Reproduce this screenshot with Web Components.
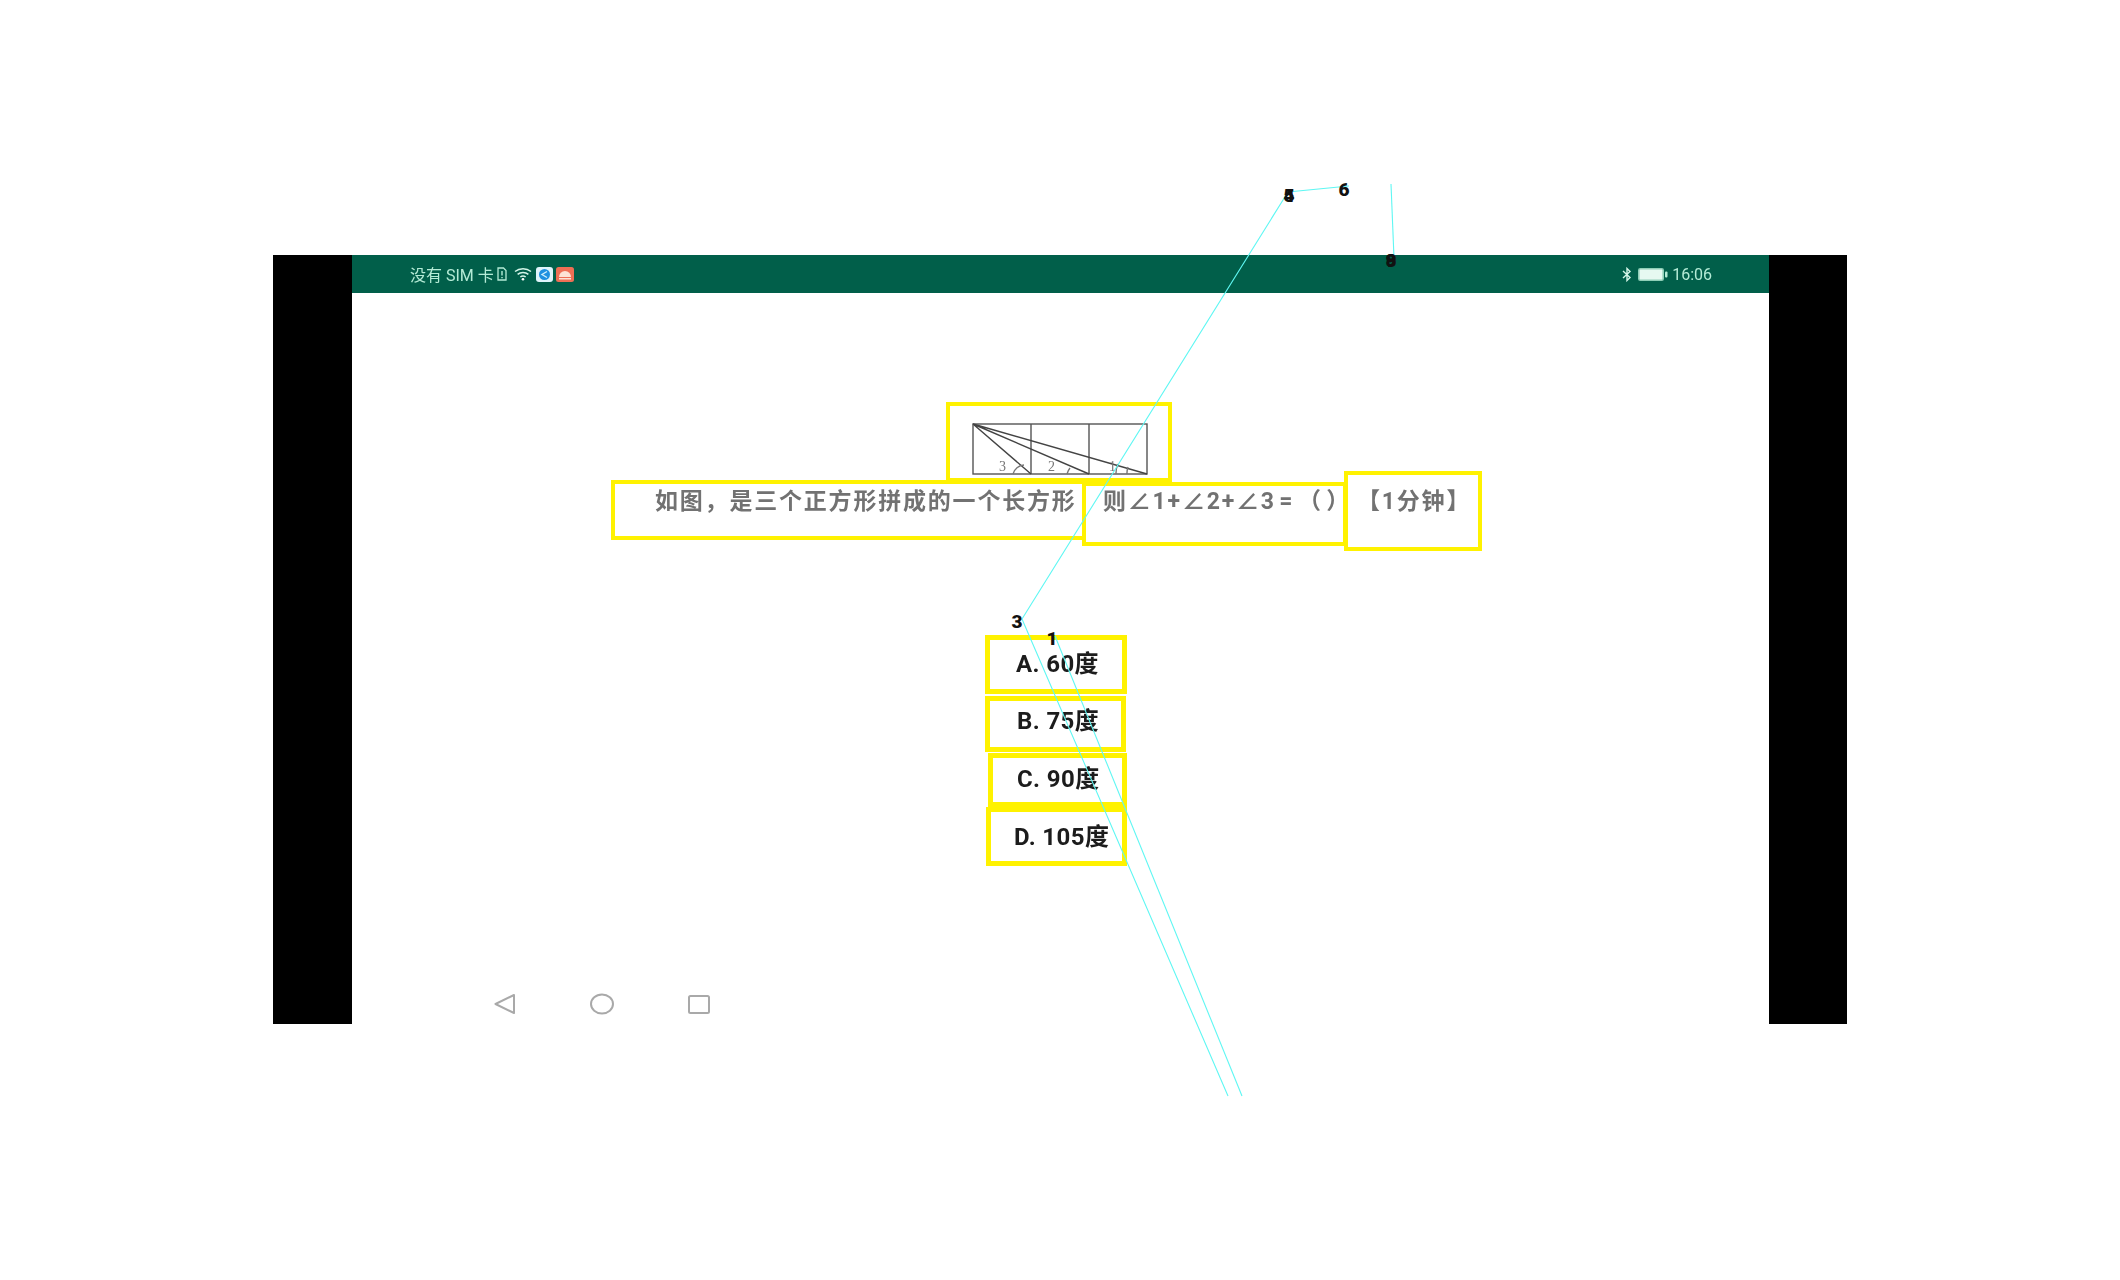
<!DOCTYPE html>
<html lang="zh"><head><meta charset="utf-8"><title>题目</title>
<style>
html,body{margin:0;background:#fff}
body{width:2120px;height:1280px;position:relative;overflow:hidden;font-family:Roboto,"Noto Sans CJK SC",sans-serif}
</style></head><body>
<device-frame>
  <status-bar slot="status"></status-bar>
  <figure-box></figure-box>
  <question-row>
    <anno-box style="--w:475px;--h:60px;--mt:9px;--pl:40px;--pt:3px" class="q">如图，是三个正方形拼成的一个长方形</anno-box>
    <anno-box style="--w:265px;--h:64px;--mt:11px;--ml:-4px;--pl:17px;--pt:1px;word-spacing:-4px" class="q">则∠1+∠2+∠3 = （ ）</anno-box>
    <anno-box style="--w:138px;--h:80px;--ml:-3px;--pl:9px;--pt:12px" class="q">【1分钟】</anno-box>
  </question-row>
  <option-list>
    <anno-box class="o" style="--w:142px;--h:59px;--ml:633px;--pl:26px;--pt:8px">A. 60度</anno-box>
    <anno-box class="o" style="--w:141px;--h:56px;--ml:633px;--mt:2px;--pl:27px;--pt:4px">B. 75度</anno-box>
    <anno-box class="o" style="--w:139px;--h:54px;--ml:636px;--mt:1px;--pl:24px;--pt:5px">C. 90度</anno-box>
    <anno-box class="o" style="--w:141px;--h:59px;--ml:634px;--pl:23px;--pt:9px">D. 105度</anno-box>
  </option-list>
  <nav-bar slot="nav"></nav-bar>
</device-frame>
<trace-overlay></trace-overlay>
<script>
function def(name, html){
  customElements.define(name, class extends HTMLElement{
    constructor(){super();const r=this.attachShadow({mode:'open'});r.innerHTML=html;}
  });
}
def('device-frame',`<style>
:host{display:flex;width:1574px;height:769px;margin:255px 0 0 273px;background:#000;justify-content:center}
.screen{width:1417px;margin-left:1px;background:#fff;display:flex;flex-direction:column}
main{flex:1;display:flex;flex-direction:column;padding-top:109px;min-height:0}
</style><div class="screen"><slot name="status"></slot><main><slot></slot></main><slot name="nav"></slot></div>`);

def('status-bar',`<style>
:host{display:flex;align-items:center;height:38px;background:#015f4a;color:#b4ebd6;font-size:16px;padding:0 57px 0 58px;box-sizing:border-box}
.in{display:flex;align-items:center;width:100%;filter:blur(.5px)}
svg{display:block;flex:none}
.sp{flex:1}
.t{font-size:16px;margin-left:4px}
</style><div class="in">
<span style="white-space:pre">没有 SIM 卡</span>
<svg style="margin-left:3px" width="10" height="14" viewBox="0 0 10 14"><path d="M1 1h5.500L9 3.500V13H1z" fill="none" stroke="#b4ebd6" stroke-width="1.300"/><path d="M5 4v4.500M5 10v1.200" stroke="#b4ebd6" stroke-width="1.400"/></svg>
<svg style="margin-left:7px" width="18" height="14" viewBox="0 0 18 14"><g fill="none" stroke="#d4f5e8" stroke-width="1.500"><path d="M1 4.500C5.500.7 12.500.7 17 4.500"/><path d="M3.600 7.300C6.600 4.800 11.400 4.800 14.400 7.300"/><path d="M6.300 10C7.800 8.900 10.200 8.900 11.700 10"/></g><circle cx="9" cy="12.300" r="1.300" fill="#fff"/></svg>
<svg style="margin-left:4px" width="17" height="15" viewBox="0 0 17 15"><rect width="17" height="15" rx="3" fill="#dff4fb"/><circle cx="8.500" cy="7.500" r="5.500" fill="#1e90e0"/><path d="M11 4.500 6 7.500l5 3" fill="none" stroke="#cdeefa" stroke-width="1.400"/></svg>
<svg style="margin-left:3px" width="18" height="15" viewBox="0 0 18 15"><rect width="18" height="15" rx="2.500" fill="#ee6f55"/><path d="M3 10a6 6 0 0 1 12 0z" fill="#fde3d5"/><rect x="3" y="11" width="12" height="1.500" fill="#fde3d5"/></svg>
<span class="sp"></span>
<svg width="10" height="15" viewBox="0 0 10 15"><path d="M1 4l7 6.500L5 13.500V1.500L8 4.500 1 11" fill="none" stroke="#d4f5e8" stroke-width="1.400"/></svg>
<svg style="margin-left:6px" width="30" height="13" viewBox="0 0 30 13"><rect x=".8" y=".8" width="24.400" height="11.400" rx="1.500" fill="#e6f9f1" stroke="#8fceb7" stroke-width="1.600"/><rect x="27" y="3.500" width="2.500" height="6" rx="1" fill="#b4ebd6"/></svg>
<span class="t">16:06</span></div>`);

def('nav-bar',`<style>
:host{display:block;height:60px;flex:none}
svg{display:block;filter:blur(.4px)}
</style><svg width="400" height="60" viewBox="0 0 400 60"><g fill="none" stroke="#a9a9a9" stroke-width="2" stroke-linejoin="round">
<path d="M162 31 143.500 40 162 49z"/><ellipse cx="250" cy="40" rx="11" ry="9.500"/><rect x="337" y="32" width="20" height="17" rx="1.500"/></g></svg>`);

def('anno-box',`<style>
:host{display:block;box-sizing:border-box;flex:none;width:var(--w);height:var(--h);margin:var(--mt,0) 0 0 var(--ml,0);padding:var(--pt,0) 0 0 var(--pl,0);border:4px solid #fff200;white-space:pre;line-height:30px}
:host(.q){color:#727272;font-size:23px;font-weight:700;letter-spacing:1.800px}
:host(.o){color:#1c1c1c;font-size:24px;font-weight:700;letter-spacing:.4px;line-height:32px;border-width:5px}
span{display:inline-block;filter:blur(.5px)}
</style><span><slot></slot></span>`);

def('figure-box',`<style>
:host{display:block;box-sizing:border-box;width:226px;height:80px;margin:0 0 -11px 594px;border:4px solid #fff200;position:relative;z-index:1}
svg{display:block;margin:17px 0 0 22px;filter:blur(.4px);overflow:visible}
text{font:14px "Liberation Serif",serif;fill:#777}
</style><svg width="176" height="52" viewBox="0 0 176 52"><g fill="none" stroke="#555" stroke-width="1.400">
<rect x="1" y="1" width="174" height="50"/><path d="M59 1V51M117 1V51"/>
<path d="M1 1 59 51M1 1 117 51M1 1 175 51" stroke="#444"/>
<path d="M41 51a12 12 0 0 1 11-9M95 51a16 16 0 0 1 3-6M144 51a22 22 0 0 1 2-10M155 51a18 18 0 0 1 1-7" stroke="#777"/>
</g><text x="27" y="48">3</text><text x="76" y="48">2</text><text x="137" y="48">1</text></svg>`);

def('question-row',`<style>:host{display:flex;align-items:flex-start;margin-left:259px;height:80px}</style><slot></slot>`);
def('option-list',`<style>:host{display:block;margin-top:84px}</style><slot></slot>`);

def('trace-overlay',`<style>
:host{position:absolute;left:0;top:0;width:2120px;height:1280px;pointer-events:none;z-index:5}
svg{display:block}
text{font:900 19px Roboto,sans-serif;fill:#111;text-anchor:middle}
</style><svg width="2120" height="1280" viewBox="0 0 2120 1280"><g fill="none" stroke="#5ff7f3" stroke-width="1.100">
<path d="M1349 186 1288 192 1022 619 1228 1096"/><path d="M1055 636 1242 1096"/><path d="M1391 184 1394 258"/></g>
<text x="1017" y="628">3</text><text x="1052" y="645">1</text>
<text x="1289" y="202">4</text><text x="1289" y="202">5</text>
<text x="1344" y="196">6</text>
<text x="1391" y="267">8</text><text x="1391" y="267">9</text>
</svg>`);
</script>
</body></html>
